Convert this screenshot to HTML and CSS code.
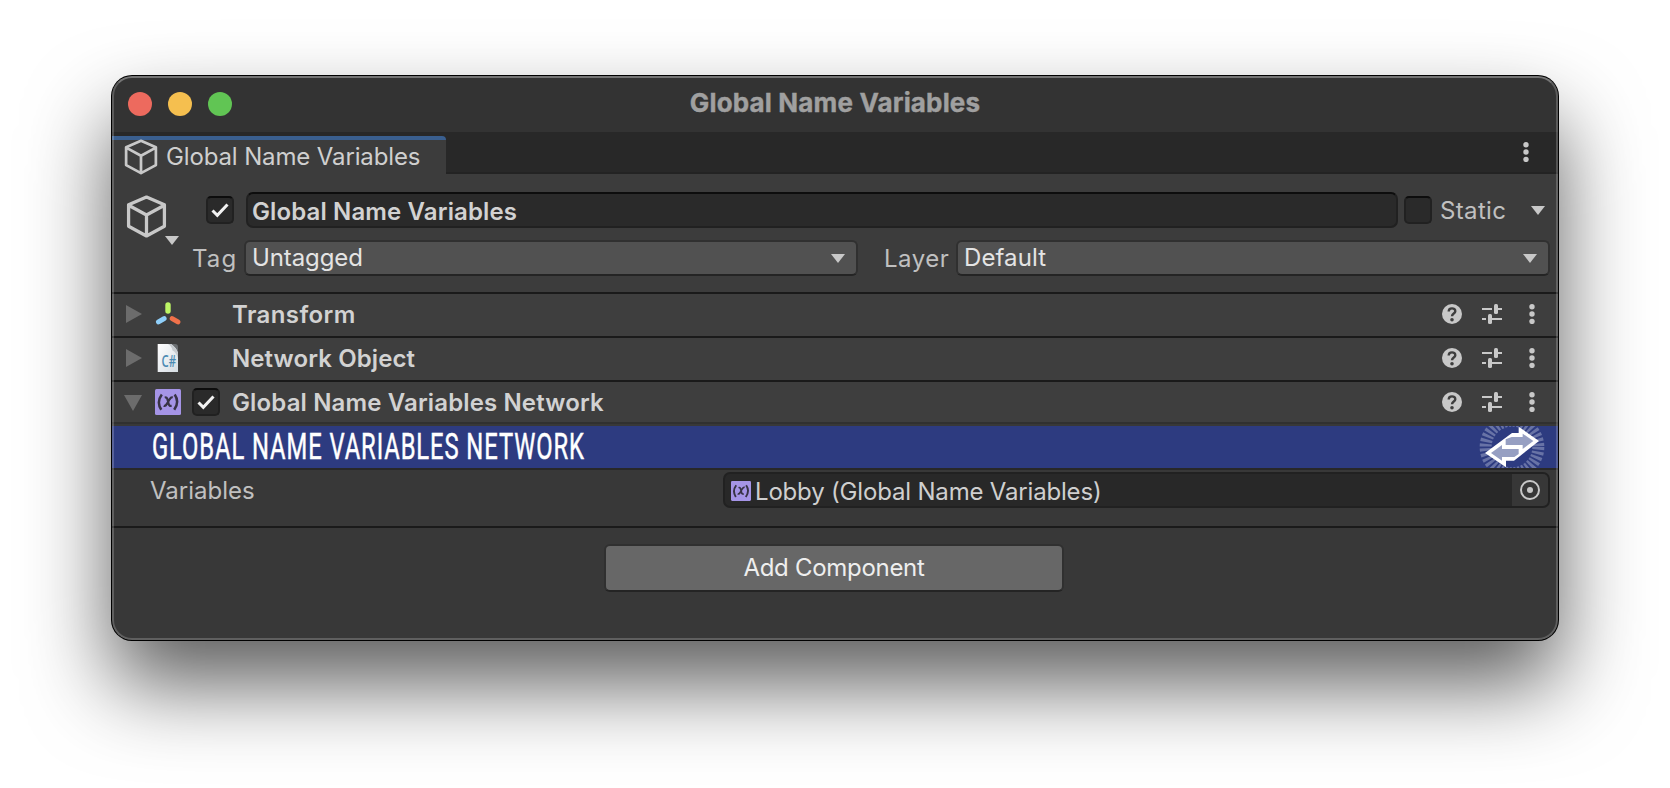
FILE: index.html
```html
<!DOCTYPE html>
<html lang="en">
<head>
<meta charset="utf-8">
<title>Global Name Variables</title>
<link rel="stylesheet" href="styles.css">
</head>
<body>
<svg class="defs" width="0" height="0">
  <symbol id="cube" viewBox="0 0 40 42"><path d="M20 2 L37.500 9.500 V30.500 L20 40 L2.500 30.500 V9.500 Z M2.500 10 L20 19.500 L37.500 10 M20 19.500 V40" fill="none" stroke="#c8c8c8" stroke-width="3.200" stroke-linejoin="round"/></symbol>
  <symbol id="check" viewBox="0 0 28 28"><path d="M6.500 14.500 L11.300 19.300 L21.500 8.500" fill="none" stroke="#f2f2f2" stroke-width="3"/></symbol>
  <symbol id="down" viewBox="0 0 14 9"><path d="M0 0H14L7 9Z" fill="#c8c8c8"/></symbol>
  <symbol id="help" viewBox="0 0 20 20"><circle cx="10" cy="10" r="10" fill="#c8c8c8"/><path d="M6.700 7.400 C6.700 3.400 13.300 3.400 13.300 7.200 C13.300 9.600 10 9.400 10 12.200" fill="none" stroke="#3e3e3e" stroke-width="2.400"/><circle cx="10" cy="15.700" r="1.800" fill="#3e3e3e"/></symbol>
  <symbol id="preset" viewBox="0 0 20 20"><path d="M0 5H10M15 5H20M0 15H4M9 15H20" stroke="#c8c8c8" stroke-width="2"/><rect x="12" y="0" width="4" height="10" rx="1.500" fill="#c8c8c8"/><rect x="6" y="10" width="4" height="10" rx="1.500" fill="#c8c8c8"/></symbol>
  <symbol id="dots" viewBox="0 0 6 20"><circle cx="3" cy="2.700" r="2.700" fill="#c8c8c8"/><circle cx="3" cy="10" r="2.700" fill="#c8c8c8"/><circle cx="3" cy="17.400" r="2.700" fill="#c8c8c8"/></symbol>
  <symbol id="variable" viewBox="0 0 26 26"><rect width="26" height="26" rx="1.500" fill="#a594e6"/><path d="M6.800 5.500 Q1.200 13 6.300 20.800 M19.700 5.500 Q24.800 13 19.200 20.800" fill="none" stroke="#383345" stroke-width="2.500"/><path d="M9.800 8.700 Q11.800 7.800 12.500 10.500 L13.700 15 Q14.400 17.600 16.600 16.600 M17.800 8.600 Q16.200 7.800 14.600 10.300 L11.900 14.900 Q10.400 17.500 8.700 16.700" fill="none" stroke="#383345" stroke-width="2.200"/></symbol>
</svg>

<main class="window">
  <header class="titlebar">
    <div class="lights"><i class="light red"></i><i class="light yellow"></i><i class="light green"></i></div>
    <h1 class="title">Global Name Variables</h1>
  </header>

  <nav class="tabs">
    <div class="tab">
      <svg class="tab-icon"><use href="#cube"/></svg>
      <span class="tab-label">Global Name Variables</span>
    </div>
    <svg class="dots tabs-menu"><use href="#dots"/></svg>
  </nav>

  <section class="object">
    <div class="object-icon">
      <svg class="cube"><use href="#cube"/></svg>
      <svg class="down"><use href="#down"/></svg>
    </div>
    <div class="object-fields">
      <div class="name-row">
        <span class="checkbox"><svg><use href="#check"/></svg></span>
        <div class="name-field"><span class="name-text">Global Name Variables</span></div>
        <span class="checkbox"></span>
        <span class="label static">Static</span>
        <svg class="down"><use href="#down"/></svg>
      </div>
      <div class="tag-row">
        <span class="label tag">Tag</span>
        <div class="dropdown tag-drop"><span class="t-untagged">Untagged</span><svg class="down"><use href="#down"/></svg></div>
        <span class="label layer">Layer</span>
        <div class="dropdown layer-drop"><span class="t-default">Default</span><svg class="down"><use href="#down"/></svg></div>
      </div>
    </div>
  </section>

  <section class="component">
    <svg class="fold" viewBox="0 0 18 18"><path d="M2 0L18 9L2 18Z" fill="#6c6c6c"/></svg>
    <svg class="type" viewBox="0 0 26 26"><g stroke-linecap="round" stroke-width="5"><path d="M13 9V2.900" stroke="#bdf565" stroke-width="5.400"/><path d="M9.100 16.600L3.500 19.900" stroke="#8fcffa"/><path d="M17.200 16.600L22.900 19.900" stroke="#f0714a"/></g></svg>
    <span class="enable"></span>
    <h2 class="name n-transform">Transform</h2>
    <div class="tools"><svg class="tool"><use href="#help"/></svg><svg class="tool"><use href="#preset"/></svg><svg class="dots"><use href="#dots"/></svg></div>
  </section>

  <section class="component">
    <svg class="fold" viewBox="0 0 18 18"><path d="M2 0L18 9L2 18Z" fill="#6c6c6c"/></svg>
    <svg class="type script" viewBox="0 0 26 30">
      <defs><linearGradient id="page" x1="0" y1="0" x2="1" y2="1"><stop offset="0" stop-color="#ffffff"/><stop offset="1" stop-color="#d5dce2"/></linearGradient></defs>
      <path d="M2.700 0H17L23 6V28H2.700Z" fill="url(#page)"/><path d="M16 0H20Q23 0 23 3V9Q21 3 16 0Z" fill="#6b6f72"/><path d="M13 0H16Q21 3 23 9V14Q21 8 17.500 6.500Q17 2.500 13 0Z" fill="#c6cbcf"/>
      <text x="6.600" y="23.300" class="cs" textLength="14.500" lengthAdjust="spacingAndGlyphs">C#</text>
    </svg>
    <span class="enable"></span>
    <h2 class="name n-network">Network Object</h2>
    <div class="tools"><svg class="tool"><use href="#help"/></svg><svg class="tool"><use href="#preset"/></svg><svg class="dots"><use href="#dots"/></svg></div>
  </section>

  <section class="component open">
    <svg class="fold" viewBox="0 0 18 18"><path d="M0 2H18L9 18Z" fill="#6c6c6c"/></svg>
    <svg class="type"><use href="#variable"/></svg>
    <span class="enable"><span class="checkbox"><svg><use href="#check"/></svg></span></span>
    <h2 class="name n-global">Global Name Variables Network</h2>
    <div class="tools"><svg class="tool"><use href="#help"/></svg><svg class="tool"><use href="#preset"/></svg><svg class="dots"><use href="#dots"/></svg></div>
  </section>

  <div class="banner">
    <span class="banner-text">GLOBAL NAME VARIABLES NETWORK</span>
    <svg class="banner-logo" viewBox="0 0 198 126">
      <circle cx="99" cy="63" r="79" fill="none" stroke="#6873a6" stroke-width="36" stroke-dasharray="8.200 5.588"/>
      <path d="M18 81L99 21H119V2L180 45L105 104H81V124Z" fill="#fff"/>
      <path d="M80 40L98 33H131V23L163 45L131 69V57H80ZM36 81L69 57V69H119V84L106 93H69V104Z" fill="#969fc2"/>
    </svg>
  </div>

  <section class="properties">
    <span class="label variables">Variables</span>
    <div class="object-field">
      <svg class="field-icon"><use href="#variable"/></svg>
      <span class="field-text">Lobby (Global Name Variables)</span>
      <span class="picker"><svg viewBox="0 0 20 20"><circle cx="10" cy="10" r="9" fill="none" stroke="#c8c8c8" stroke-width="2"/><circle cx="10" cy="10" r="3" fill="#c8c8c8"/></svg></span>
    </div>
  </section>

  <footer class="footer"><div class="add"><span class="add-text">Add Component</span></div></footer>
</main>
</body>
</html>
```
FILE: styles.css
```css
* { box-sizing: border-box; }

body {
  margin: 0;
  padding: 76px 0 0 112px;
  width: 1670px;
  height: 788px;
  overflow: hidden;
  background: #fff;
  font: 400 24px/30px Inter, "Liberation Sans", sans-serif;
  color: #c4c4c4;
}

svg { display: block; flex: none; }
.defs { position: absolute; }
h1, h2 { margin: 0; }
span { white-space: nowrap; }

.window {
  position: relative;
  width: 1446px;
  height: 564px;
  border-radius: 20px;
  background: #383838;
  box-shadow: 0 0 0 1px #000, 0 44px 84px rgba(0, 0, 0, .64);
  overflow: hidden;
}

/* light rim over the window's edge */
.window::after {
  content: "";
  position: absolute;
  inset: 0;
  border: 2px solid rgba(255, 255, 255, .2);
  border-top-color: rgba(255, 255, 255, .32);
  border-radius: 20px;
}

.titlebar {
  display: grid;
  grid-template-columns: 1fr auto 1fr;
  height: 56px;
  background: #333;
}
.lights { display: flex; gap: 16px; padding: 16px 0 0 16px; }
.light { width: 24px; height: 24px; border-radius: 50%; }
.red { background: #ed6a5e; }
.yellow { background: #f5bf4f; }
.green { background: #61c554; }
.title {
  padding-top: 11px;
  font-size: 26px;
  line-height: 32px;
  font-weight: 700;
  letter-spacing: .16px;
  -webkit-text-stroke: .4px #a0a0a0;
  color: #a0a0a0;
}

.tabs {
  display: flex;
  justify-content: space-between;
  height: 42px;
  padding-top: 4px;
  background: linear-gradient(#282828 40px, #232323 40px);
}
.tab {
  display: flex;
  width: 334px;
  height: 38px;
  padding-left: 12px;
  border-top: 4px solid #3a5f8f;
  border-top-right-radius: 4px;
  background: #3c3c3c;
}
.tab-icon { width: 34px; height: 36px; margin-top: -1px; }
.tab-label { margin: 2px 0 0 8px; letter-spacing: -.13px; color: #cfcfcf; }
.dots { width: 6px; height: 20px; }
.tabs-menu { margin: 6px 29px 0 0; }

.object {
  display: flex;
  height: 120px;
  padding: 18px 8px 0 14px;
  background: #3c3c3c;
  border-bottom: 2px solid #1a1a1a;
}
.object-icon { width: 60px; padding-top: 3px; }
.cube { width: 41px; height: 43px; }
.down { width: 14px; height: 9px; }
.object-icon .down { margin: -2px 0 0 39px; }
.object-fields { flex: 1; }
.name-row { display: flex; align-items: center; height: 36px; padding-left: 20px; }
.checkbox {
  width: 28px;
  height: 28px;
  flex: none;
  border: 2px solid #212121;
  border-top-color: #0d0d0d;
  border-radius: 5px;
  background: #2a2a2a;
}
.checkbox svg { width: 28px; height: 28px; margin: -2px; }
.name-field {
  width: 1152px;
  height: 36px;
  margin: 0 6px 0 12px;
  padding: 3px 0 0 4px;
  border: 2px solid #212121;
  border-top-color: #0d0d0d;
  border-radius: 7px;
  background: #2a2a2a;
}
.name-text { font-weight: 600; letter-spacing: .13px; color: #d2d2d2; }
.label { color: #c0c0c0; }
.static { width: 99px; padding: 2px 0 0 8px; letter-spacing: .35px; }

.tag-row { display: flex; height: 36px; margin-top: 12px; }
.tag { width: 58px; padding: 4px 0 0 6px; letter-spacing: 1.1px; }
.layer { width: 98px; padding: 4px 0 0 26px; letter-spacing: .5px; }
.dropdown {
  display: flex;
  justify-content: space-between;
  height: 36px;
  padding: 2px 11px 0 6px;
  border: 2px solid #303030;
  border-bottom-color: #242424;
  border-radius: 6px;
  background: #515151;
  color: #e4e4e4;
}
.dropdown span { margin-top: -1px; }
.t-untagged { letter-spacing: -.1px; }
.t-default { letter-spacing: .1px; }
.dropdown .down { margin-top: 10px; }
.tag-drop { width: 614px; }
.layer-drop { width: 594px; }

.component {
  display: flex;
  align-items: center;
  height: 44px;
  padding-left: 12px;
  background: #3e3e3e;
  border-bottom: 2px solid #1a1a1a;
}
.component.open { height: 42px; border-bottom-color: #303030; }
.fold { width: 18px; height: 18px; margin-top: -2px; }
.open .fold { margin-top: -1px; }
.type { width: 26px; height: 26px; margin-left: 13px; }
.script { height: 30px; overflow: visible; }
.cs { font: 600 17px "Open Sans", sans-serif; fill: #4b8ab3; }
.enable { display: flex; width: 28px; margin: 0 12px 0 11px; }
.name { flex: 1; margin-top: -1px; font-size: 24px; line-height: 30px; font-weight: 600; color: #d2d2d2; }
.open .name { margin-top: 1px; }
.n-transform { letter-spacing: .4px; }
.n-network { letter-spacing: .1px; }
.n-global { letter-spacing: .14px; }
.tools { display: flex; align-items: center; margin: -2px 23px 0 0; }
.open .tools { margin-top: 0; }
.tool { width: 20px; height: 20px; margin-right: 20px; }
.tools .tool + .tool { margin-right: 27px; }

.banner {
  display: flex;
  justify-content: space-between;
  height: 46px;
  padding: 0 13px 0 40px;
  border-top: 2px solid #383838;
  border-bottom: 2px solid #282828;
  background: #2d3b80;
}
.banner-text {
  width: 440px;
  font: 400 36px/43px Roboto, sans-serif;
  letter-spacing: 1.4px;
  -webkit-text-stroke: .5px #fff;
  transform: scaleX(.66);
  transform-origin: 0 0;
  color: #fff;
}
.banner-logo { width: 66px; height: 42px; }

.properties {
  display: flex;
  justify-content: space-between;
  height: 58px;
  padding: 2px 8px 0 38px;
  border-bottom: 2px solid #1a1a1a;
}
.variables { padding-top: 4px; }
.object-field {
  display: flex;
  width: 827px;
  height: 36px;
  padding-left: 6px;
  border: 2px solid #212121;
  border-radius: 7px;
  background: #282828;
  overflow: hidden;
}
.field-icon { width: 20px; height: 20px; margin-top: 7px; }
.field-text { flex: 1; padding: 3px 0 0 4px; letter-spacing: -.18px; color: #cfcfcf; }
.picker { width: 36px; padding: 6px 0 0 8px; background: #373737; }
.picker svg { width: 20px; height: 20px; }

.footer { display: flex; padding: 16px 0 0 492px; }
.add {
  width: 460px;
  height: 48px;
  padding-top: 7px;
  border: 2px solid #303030;
  border-bottom-color: #242424;
  border-radius: 6px;
  background: #676767;
  text-align: center;
  color: #eee;
}
.add-text { letter-spacing: -.3px; }
```
